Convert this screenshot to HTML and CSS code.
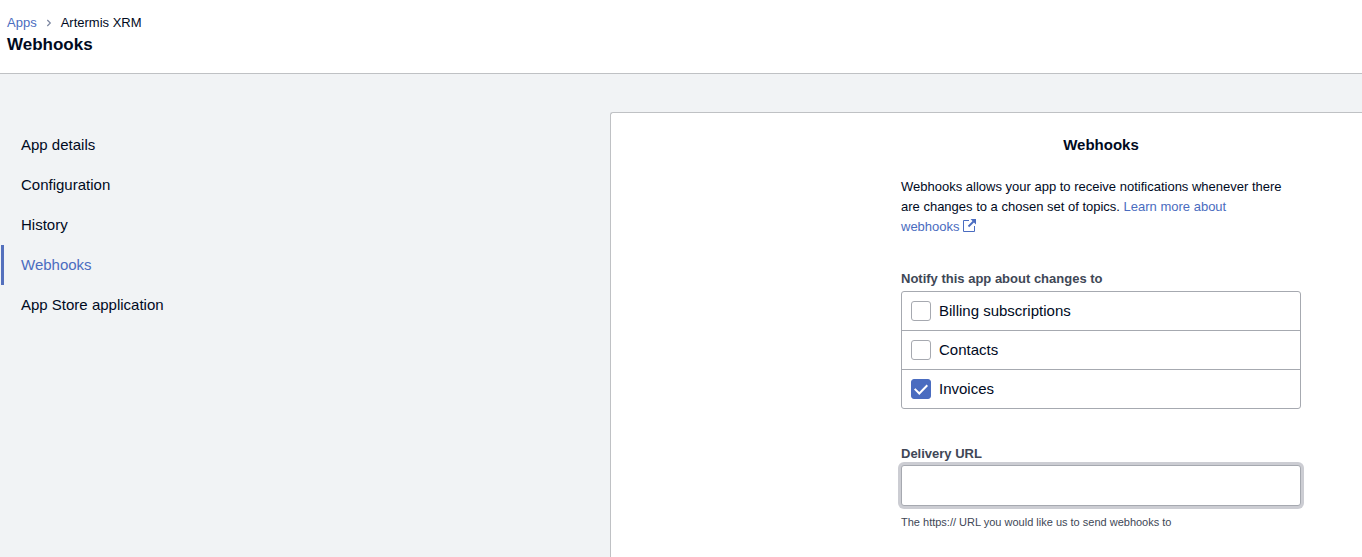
FILE: index.html
```html
<!DOCTYPE html>
<html lang="en">
<head>
<meta charset="utf-8">
<meta name="viewport" content="width=device-width, initial-scale=1">
<title>Webhooks</title>
<link rel="stylesheet" href="styles.css">
</head>
<body>
<header class="page-header">
  <nav class="breadcrumb" aria-label="Breadcrumb">
    <a href="#apps">Apps</a>
    <svg class="chevron" viewBox="0 0 6 8" aria-hidden="true"><path d="M1.3 1 4.3 4 1.3 7"/></svg>
    <span>Artermis XRM</span>
  </nav>
  <h1 class="page-title">Webhooks</h1>
</header>
<div class="layout">
  <nav class="side-nav" aria-label="App">
    <a class="nav-item" href="#details">App details</a>
    <a class="nav-item" href="#configuration">Configuration</a>
    <a class="nav-item" href="#history">History</a>
    <a class="nav-item nav-item-active" href="#webhooks" aria-current="page">Webhooks</a>
    <a class="nav-item" href="#app-store">App Store application</a>
  </nav>
  <main class="panel">
    <form class="form">
      <h2 class="form-title">Webhooks</h2>
      <p class="intro">Webhooks allows your app to receive notifications whenever there are changes to a chosen set of topics. <a href="#learn">Learn more about <span class="keep">webhooks <svg class="external" viewBox="0 0 13 13" aria-hidden="true"><path d="M6 1.5H.5v11h11V7"/><path class="external-stem" d="M5.5 7.5 10.5 2.5"/><path class="external-head" d="M7.5 0H13v5.5z"/></svg></span></a></p>
      <fieldset class="topics">
        <legend class="label">Notify this app about changes to</legend>
        <div class="topic-list">
          <label class="topic"><input class="check" type="checkbox">Billing subscriptions</label>
          <label class="topic"><input class="check" type="checkbox">Contacts</label>
          <label class="topic"><input class="check" type="checkbox" checked>Invoices</label>
        </div>
      </fieldset>
      <label class="label label-tight" for="delivery-url">Delivery URL</label>
      <input class="url-input" id="delivery-url" type="url" aria-describedby="url-hint">
      <p class="hint" id="url-hint">The https:// URL you would like us to send webhooks to</p>
    </form>
  </main>
</div>
</body>
</html>
```
FILE: styles.css
```css
* { box-sizing: border-box; }

body {
  display: flex;
  flex-direction: column;
  min-height: 100vh;
  margin: 0;
  background: #f1f3f5;
  color: #000a1e;
  font-family: "Liberation Sans", Arial, sans-serif;
  font-size: 15px;
}

a { color: #4a6cc0; text-decoration: none; }

.page-header {
  padding: 13px 7px 17px;
  border-bottom: 1px solid #bfc1c4;
  background: #fff;
}

.breadcrumb {
  display: flex;
  align-items: center;
  gap: 9px;
  font-size: 13px;
  line-height: 20px;
}

.chevron {
  width: 6px;
  height: 8px;
  fill: none;
  stroke: #7c86a0;
  stroke-width: 1.2;
}

.page-title {
  margin: 0;
  font-size: 17px;
  line-height: 23px;
}

.layout {
  display: grid;
  flex: 1;
  grid-template-columns: 610px minmax(0, 1fr);
  padding-top: 38px;
}

.side-nav {
  display: flex;
  flex-direction: column;
  padding: 13px 1px;
}

.nav-item {
  padding-left: 17px;
  border-left: 3px solid transparent;
  color: #000a1e;
  line-height: 40px;
}

.nav-item-active { border-color: #5470bd; color: #4a6cc0; }

.panel {
  padding: 22px 61px 20px 290px;
  border: solid #bfc1c4;
  border-width: 1px 0 0 1px;
  border-top-left-radius: 3px;
  background: #fff;
}

.form { max-width: 400px; }

.form-title {
  margin: 0 0 22px;
  font-size: 15px;
  line-height: 20px;
  text-align: center;
}

.intro {
  margin: 0 0 32px;
  font-size: 13px;
  line-height: 20px;
}

.keep { white-space: nowrap; }

.external {
  width: 13px;
  height: 13px;
  vertical-align: -1px;
  fill: none;
  stroke: #4a6cc0;
}

.external-stem { stroke-width: 1.8; }

.external-head { fill: #4a6cc0; stroke: none; }

.topics {
  min-width: 0;
  margin: 0 0 35px;
  padding: 0;
  border: 0;
}

.label {
  display: block;
  padding: 0 0 2px;
  color: #404756;
  font-size: 13px;
  font-weight: bold;
  line-height: 20px;
}

.label-tight { padding-bottom: 1px; }

.topic-list {
  border: 1px solid #a6a9b0;
  border-radius: 3px;
}

.topic {
  display: flex;
  align-items: center;
  gap: 8px;
  height: 38px;
  padding-left: 9px;
  line-height: 20px;
}

.topic + .topic { height: 39px; border-top: 1px solid #a6a9b0; }

.check {
  width: 20px;
  height: 20px;
  margin: 0;
  appearance: none;
  border: 1px solid #a6a9b0;
  border-radius: 3px;
  background: #fff;
}

.check:checked {
  display: grid;
  place-items: center;
  border-color: #4a6cc0;
  background: #4a6cc0;
}

.check:checked::before {
  width: 14px;
  height: 12px;
  background: #fff;
  clip-path: path("M1.4 5.2 5.3 9.1 12.6 1.5 14 2.9 5.3 12 0 6.6Z");
  content: "";
}

.url-input {
  display: block;
  width: 100%;
  height: 41px;
  padding: 0 10px;
  border: 1px solid #a6a9b0;
  border-radius: 3px;
  outline: none;
  box-shadow: 0 0 0 3px #cccdd3;
  background: #fff;
  font: inherit;
}

.hint {
  margin: 8px 0 0;
  color: #404756;
  font-size: 11px;
  line-height: 16px;
}
```
